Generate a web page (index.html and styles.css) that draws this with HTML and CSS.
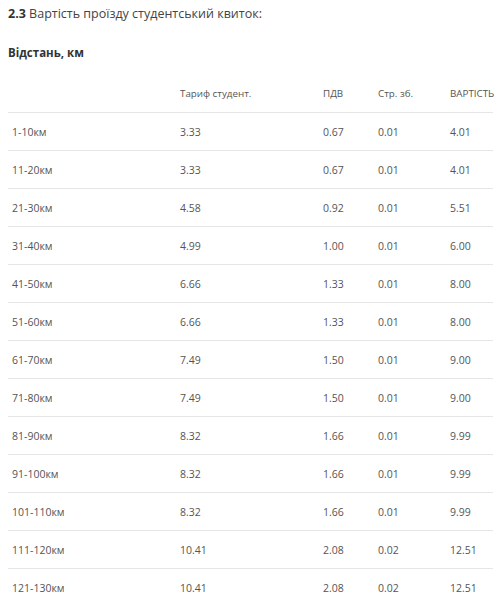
FILE: index.html
```html
<!DOCTYPE html>
<html lang="uk">
<head>
<meta charset="utf-8">
<link rel="stylesheet" href="styles.css">
</head>
<body>
<p class="title"><b>2.3</b> Вартість проїзду студентський квиток:</p>
<p class="sub">Відстань, км</p>
<table class="fares">
<colgroup><col class="c1"><col class="c2"><col class="c3"><col class="c4"><col class="c5"></colgroup>
<thead>
<tr><th></th><th>Тариф студент.</th><th>ПДВ</th><th>Стр. зб.</th><th>ВАРТІСТЬ</th></tr>
</thead>
<tbody>
<tr><td>1-10км</td><td>3.33</td><td>0.67</td><td>0.01</td><td>4.01</td></tr>
<tr><td>11-20км</td><td>3.33</td><td>0.67</td><td>0.01</td><td>4.01</td></tr>
<tr><td>21-30км</td><td>4.58</td><td>0.92</td><td>0.01</td><td>5.51</td></tr>
<tr><td>31-40км</td><td>4.99</td><td>1.00</td><td>0.01</td><td>6.00</td></tr>
<tr><td>41-50км</td><td>6.66</td><td>1.33</td><td>0.01</td><td>8.00</td></tr>
<tr><td>51-60км</td><td>6.66</td><td>1.33</td><td>0.01</td><td>8.00</td></tr>
<tr><td>61-70км</td><td>7.49</td><td>1.50</td><td>0.01</td><td>9.00</td></tr>
<tr><td>71-80км</td><td>7.49</td><td>1.50</td><td>0.01</td><td>9.00</td></tr>
<tr><td>81-90км</td><td>8.32</td><td>1.66</td><td>0.01</td><td>9.99</td></tr>
<tr><td>91-100км</td><td>8.32</td><td>1.66</td><td>0.01</td><td>9.99</td></tr>
<tr><td>101-110км</td><td>8.32</td><td>1.66</td><td>0.01</td><td>9.99</td></tr>
<tr><td>111-120км</td><td>10.41</td><td>2.08</td><td>0.02</td><td>12.51</td></tr>
<tr><td>121-130км</td><td>10.41</td><td>2.08</td><td>0.02</td><td>12.51</td></tr>
</tbody>
</table>
</body>
</html>
```
FILE: styles.css
```css
body {
  margin: 0;
  padding: 0 7px 0 8px;
  font-family: "Open Sans", "DejaVu Sans", sans-serif;
  color: #555;
  background: #fff;
}
.title {
  margin: 4px 0 0;
  font-size: 12.5px;
  line-height: 20px;
  color: #444;
}
.title b { color: #333; }
.sub {
  margin: 19px 0 0;
  font-size: 11.5px;
  font-weight: bold;
  line-height: 20px;
  color: #333;
}
.fares {
  margin-top: 10px;
  width: 100%;
  border-collapse: collapse;
  table-layout: fixed;
  font-size: 10.5px;
}
.c1 { width: 172px; }
.c2 { width: 143px; }
.c3 { width: 55px; }
.c4 { width: 72px; }
.fares th, .fares td {
  text-align: left;
  font-weight: normal;
  padding: 0;
  height: 37px;
  border-bottom: 1px solid #e6e6e6;
}
.fares th {
  font-size: 9.8px;
  padding-top: 2px;
}
.fares td:first-child { padding-left: 4px; }
.fares tbody tr:last-child td { border-bottom: none; }
```
